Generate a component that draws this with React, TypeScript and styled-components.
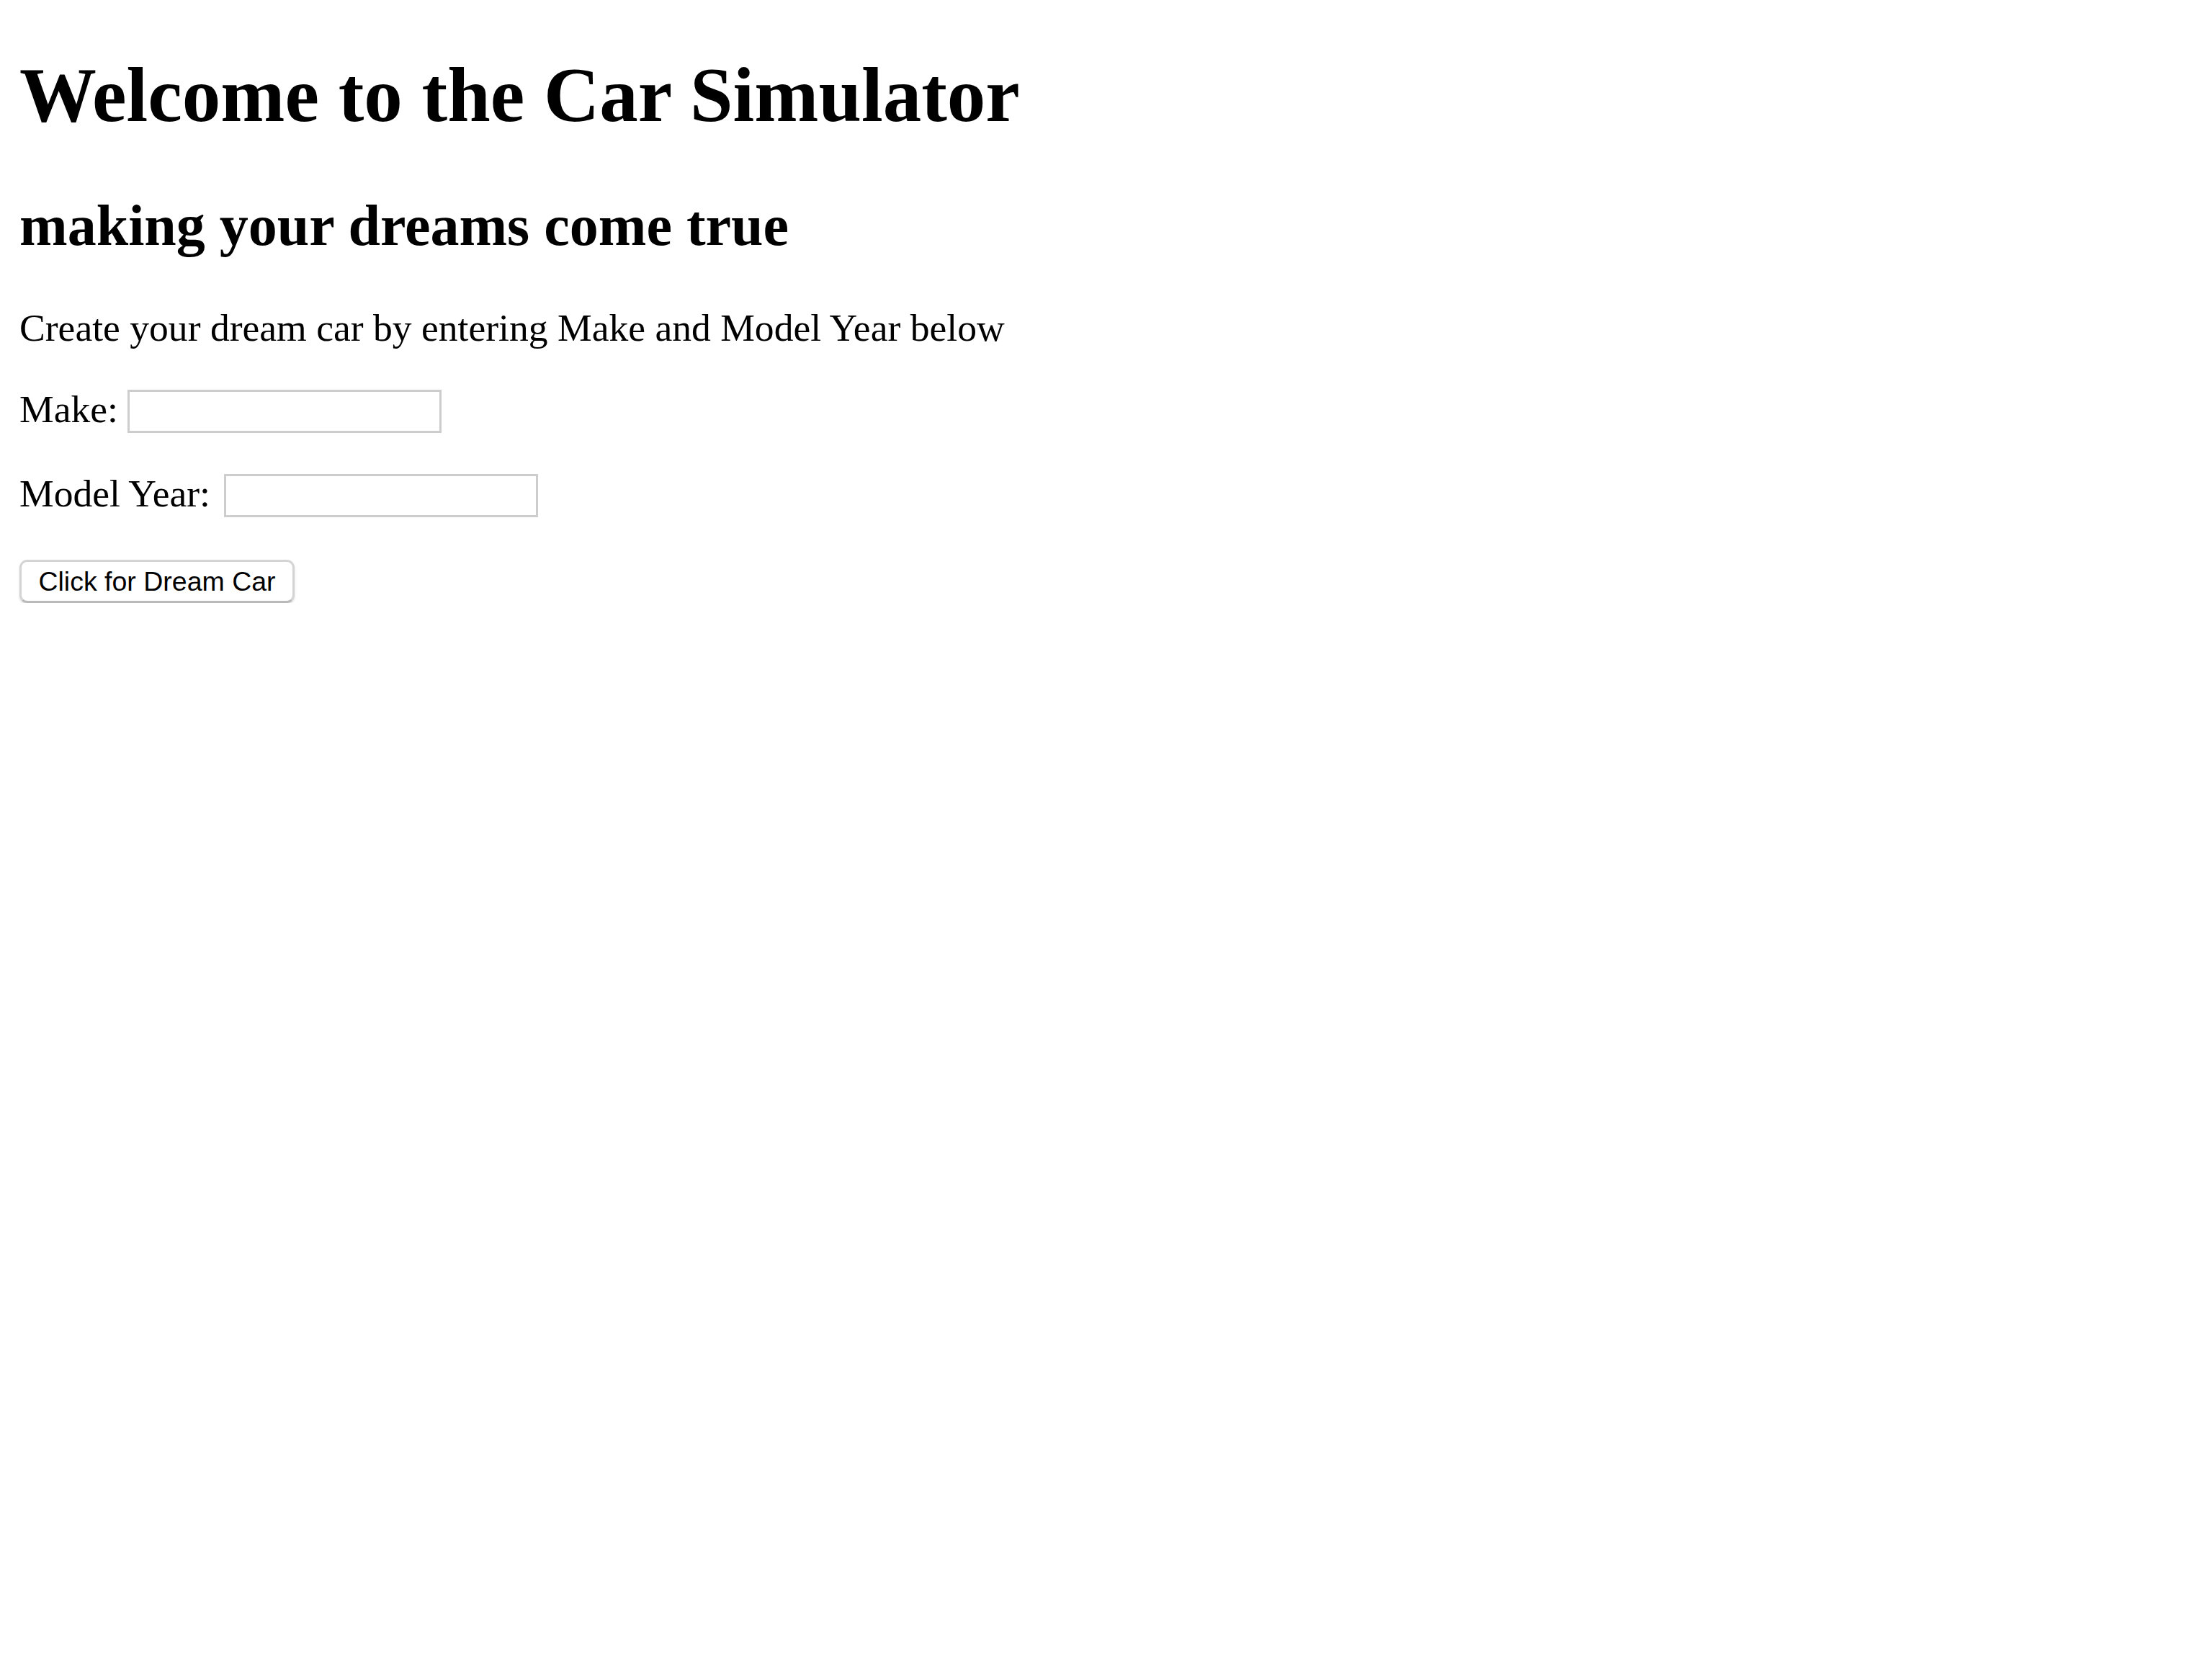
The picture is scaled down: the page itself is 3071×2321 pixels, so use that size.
import React from "react";
import styled, { createGlobalStyle } from "styled-components";

const GlobalStyle = createGlobalStyle`
  html, body {
    margin: 0;
    padding: 0;
    background: #ffffff;
    color: #000000;
    font-family: "Liberation Serif", "Times New Roman", serif;
  }
`;

const Page = styled.div`
  display: flex;
  flex-direction: column;
  align-items: flex-start;
  padding: 0 27px;
`;

const Title = styled.h1`
  margin: 71px 0 0;
  font-size: 107px;
  line-height: 122px;
  font-weight: bold;
`;

const Subtitle = styled.h2`
  margin: 74px 0 0;
  font-size: 80px;
  line-height: 92px;
  font-weight: bold;
`;

const Text = styled.p<{ $top: number }>`
  margin: ${(p) => p.$top}px 0 0;
  font-size: 53.6px;
  line-height: 61px;
  white-space: nowrap;
`;

const Field = styled.input<{ $gap?: number }>`
  box-sizing: border-box;
  width: 436px;
  height: 60px;
  margin: 0 0 0 ${(p) => p.$gap ?? 0}px;
  padding: 0 6px;
  border: 3px solid #cdcdcd;
  background: #ffffff;
  font-family: "Liberation Sans", Arial, sans-serif;
  font-size: 44px;
  vertical-align: baseline;
  outline: none;
`;

const ButtonRow = styled.div`
  margin-top: 59px;
`;

const Button = styled.button`
  display: flex;
  align-items: center;
  justify-content: center;
  box-sizing: border-box;
  width: 382px;
  height: 60px;
  padding: 2px 0 0;
  border: 3px solid #d4d4d4;
  border-bottom-color: #bababa;
  border-radius: 11px;
  background: #ffffff;
  box-shadow: 0 2px 3px rgba(0, 0, 0, 0.14);
  color: #000000;
  font-family: "Liberation Sans", Arial, sans-serif;
  font-size: 37.5px;
  line-height: 1;
  white-space: nowrap;
  cursor: pointer;
`;

export default function App() {
  return (
    <>
      <GlobalStyle />
      <Page>
        <Title>Welcome to the Car Simulator</Title>
        <Subtitle>making your dreams come true</Subtitle>
        <Text $top={66}>Create your dream car by entering Make and Model Year below</Text>
        <Text $top={52}>
          Make: <Field type="text" />
        </Text>
        <Text $top={54}>
          Model Year: <Field type="text" $gap={6} />
        </Text>
        <ButtonRow>
          <Button type="button">Click for Dream Car</Button>
        </ButtonRow>
      </Page>
    </>
  );
}
